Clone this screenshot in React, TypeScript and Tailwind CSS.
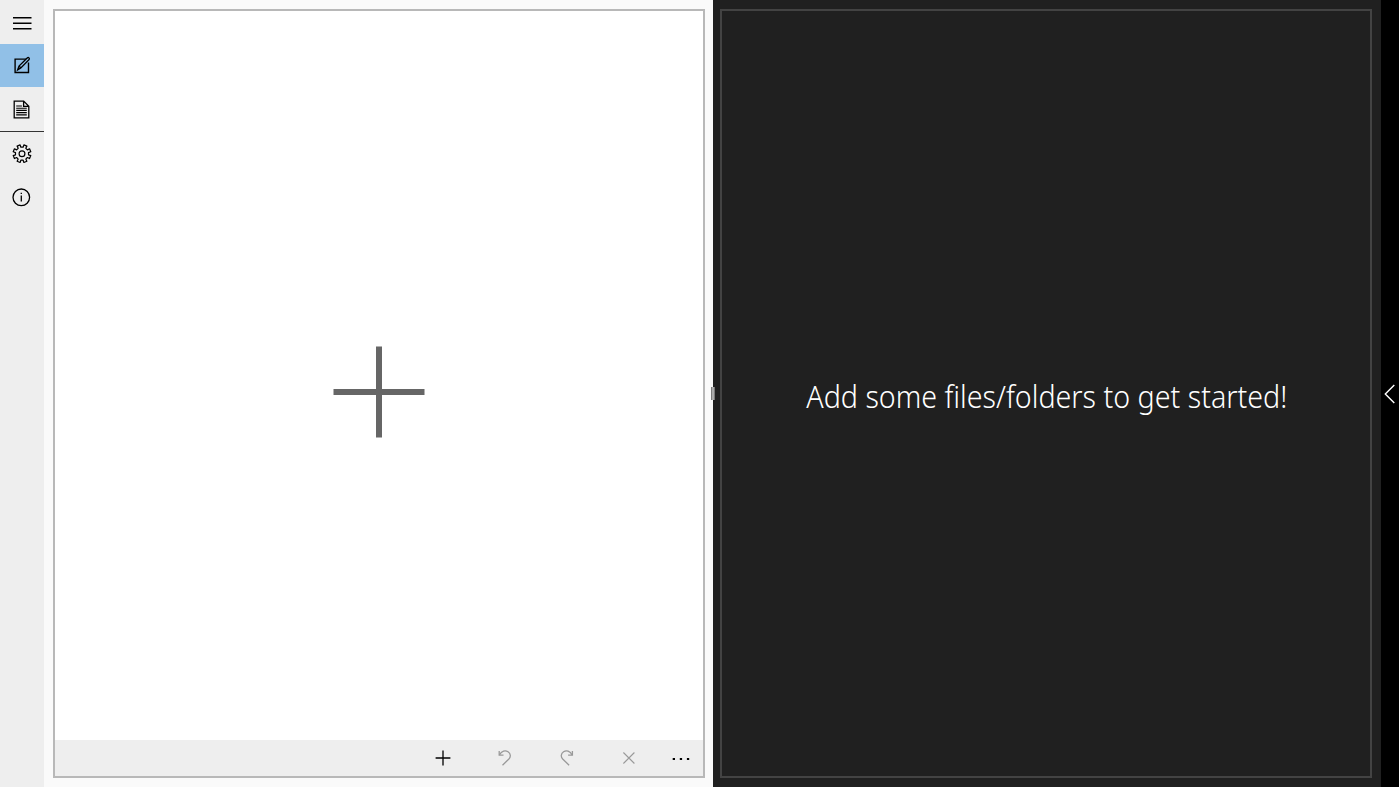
import type { ReactNode } from "react";

function Icon({ children, className = "" }: { children: ReactNode; className?: string }) {
  return (
    <svg
      className={`size-6 shrink-0 ${className}`}
      viewBox="0 0 24 24"
      fill="none"
      stroke="currentColor"
      strokeWidth={1.3}
    >
      {children}
    </svg>
  );
}

function NavButton({ label, active, children }: { label: string; active?: boolean; children: ReactNode }) {
  return (
    <button
      aria-label={label}
      className={`flex h-[43.5px] w-full items-center justify-center ${active ? "bg-[#91c0e7]" : ""}`}
    >
      {children}
    </button>
  );
}

// eight teeth around the hub
function gearPath() {
  const points: string[] = [];
  for (let i = 0; i < 8; i++) {
    const center = (i * Math.PI) / 4 + Math.PI / 8;
    const corners = [
      [-0.22, 6.6],
      [-0.18, 9],
      [0.18, 9],
      [0.22, 6.6],
    ];
    corners.forEach(([offset, radius]) => {
      const x = 12 + radius * Math.cos(center + offset);
      const y = 12 + radius * Math.sin(center + offset);
      points.push(`${x.toFixed(2)} ${y.toFixed(2)}`);
    });
  }
  return `M${points.join("L")}Z`;
}

function Sidebar() {
  return (
    <nav className="flex w-11 shrink-0 flex-col bg-[#eeeeee] text-black">
      <NavButton label="Menu">
        <Icon className="translate-y-[1px]">
          <path d="M3 6.7h18.5M3 12.2h18.5M3 17.7h18.5" strokeWidth={1.5} />
        </Icon>
      </NavButton>
      <NavButton label="Edit" active>
        <Icon className="translate-y-[0.7px]">
          <path d="M16 5.4H5.1v13.4h13.4V8.8" strokeWidth={1.4} />
          <path d="m7.6 16.2 1.4-3.9 8.2-8c.6-.6 1.3-.6 1.8-.1s.5 1.2-.1 1.8l-8.1 8.2-3.2 2ZM9 12.3l1.9 1.9" strokeWidth={1.3} />
        </Icon>
      </NavButton>
      <div className="border-b border-[#333333]">
        <NavButton label="Document">
          <Icon className="-translate-x-[0.5px] translate-y-[0.5px]">
            <path d="M4.7 3.6h9.5l5.1 5.1v11.7H4.7ZM14.1 3.6v5.2h5.2" />
            <path d="M6.7 8.5h5.7M6.7 10.7h10.6M6.7 12.9h10.6M6.7 15.1h10.6M6.7 17.3h10.6" strokeWidth={1.15} />
          </Icon>
        </NavButton>
      </div>
      <NavButton label="Settings">
        <Icon className="translate-y-[0.7px]">
          <path d={gearPath()} strokeWidth={1.2} strokeLinejoin="round" />
          <circle cx="12" cy="12" r="2.9" strokeWidth={1.2} />
        </Icon>
      </NavButton>
      <NavButton label="About">
        <Icon className="-translate-x-[0.7px] translate-y-[0.3px]">
          <circle cx="12" cy="12" r="8.3" strokeWidth={1.3} />
          <path d="M12 10.2v6" />
          <path d="M12 7.4v1.4" />
        </Icon>
      </NavButton>
    </nav>
  );
}

function CommandBar() {
  return (
    <footer className="flex h-[36.5px] shrink-0 items-center justify-end bg-[#eeeeee] text-[#999999]">
      <button aria-label="Add" className="flex w-[62px] justify-center text-black">
        <Icon className="translate-x-[0.9px]">
          <path d="M4.7 12h14.8M12.1 4.6v14.8" strokeWidth={1.3} />
        </Icon>
      </button>
      <button aria-label="Undo" className="flex w-[62px] justify-center">
        <Icon className="translate-x-[0.7px]">
          <path d="M6.5 5v4.2h4.3" />
          <path d="M6.7 9c2.2-4.2 5.9-5 8.6-3.2 2.8 1.8 3 5 .9 7.2l-6.4 6.2" />
        </Icon>
      </button>
      <button aria-label="Redo" className="flex w-[62px] justify-center">
        <Icon className="translate-x-[0.9px]">
          <path d="M17.5 5v4.2h-4.3" />
          <path d="M17.3 9c-2.2-4.2-5.9-5-8.6-3.2-2.8 1.8-3 5-.9 7.2l6.4 6.2" />
        </Icon>
      </button>
      <button aria-label="Delete" className="flex w-[62px] justify-center">
        <Icon className="translate-x-[0.9px]">
          <path d="m6.5 6.5 11 11m0-11-11 11" strokeWidth={1.1} />
        </Icon>
      </button>
      <button aria-label="More" className="flex w-11 justify-center text-black">
        <Icon>
          <path d="M3.7 13h2.3M10.8 13h2.3M17.9 13h2.3" strokeWidth={2.2} />
        </Icon>
      </button>
    </footer>
  );
}

function EditorPane() {
  return (
    <section className="flex w-[669px] shrink-0 bg-[#fafafa] pt-[9px] pr-2 pb-[9px] pl-[9px]">
      <div className="flex flex-1 flex-col border-2 border-[#b8b8b8] bg-white">
        <div className="flex flex-1 items-center justify-center pt-[34px]">
          <svg className="size-[92px] text-[#666666]" viewBox="0 0 92 92" stroke="currentColor" strokeWidth={6}>
            <path d="M.5 46h91M46 .5v91" />
          </svg>
        </div>
        <CommandBar />
      </div>
    </section>
  );
}

function PreviewPane() {
  return (
    <section className="relative flex flex-1 bg-[#202020] pt-[9px] pr-[9px] pb-[9px] pl-[7px]">
      <div className="absolute top-[387px] -left-0.5 h-[13px] w-1 border-x border-[#7a7a7a] bg-[#aaaaaa]" />
      <div className="flex flex-1 items-center justify-center border-2 border-[#434343]">
        <p className="translate-x-[1px] translate-y-[2px] scale-x-[0.895] font-['Noto_Sans',sans-serif] text-[32px] leading-[44px] font-light whitespace-nowrap text-white">
          Add some files/folders to get started!
        </p>
      </div>
    </section>
  );
}

export default function App() {
  return (
    <main className="flex h-[787px] w-[1399px] overflow-hidden">
      <Sidebar />
      <EditorPane />
      <PreviewPane />
      <aside className="flex w-[18px] shrink-0 items-center justify-center bg-black text-white">
        <svg className="h-5 w-3 -translate-x-[0.7px]" viewBox="0 0 12 20" fill="none" stroke="currentColor" strokeWidth={1.4}>
          <path d="M11 1 2 10l9 9" />
        </svg>
      </aside>
    </main>
  );
}
